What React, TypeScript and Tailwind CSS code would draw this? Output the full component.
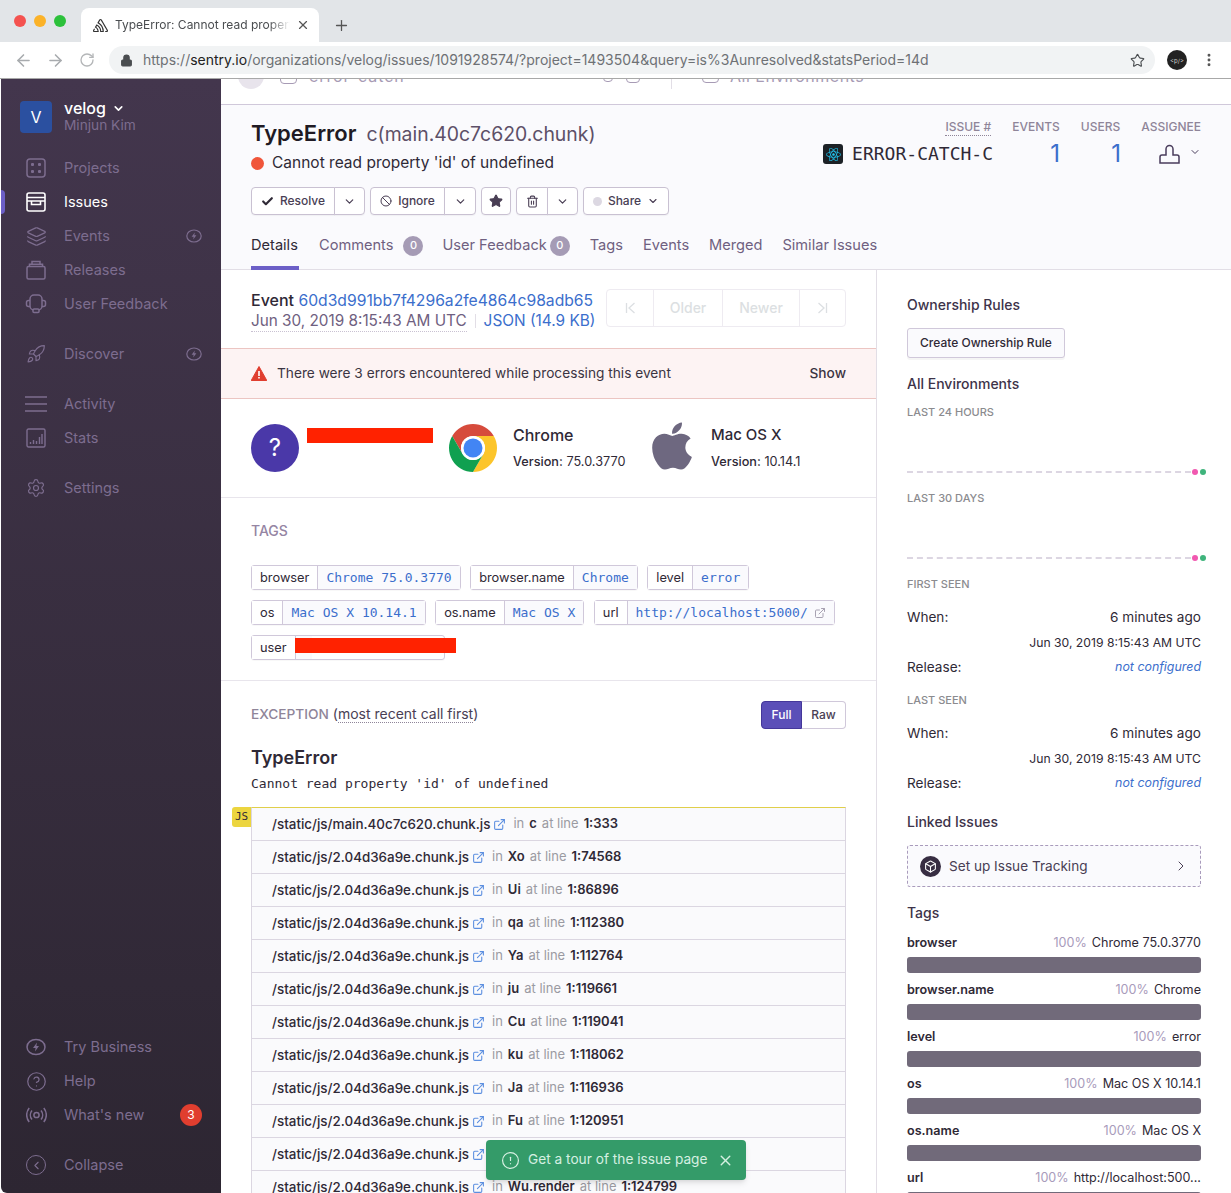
import React from 'react';
import {
  ArrowLeft, ArrowRight, Check, ChevronDown, ChevronLeft, ChevronRight, CircleAlert, CircleHelp,
  Ban, Box, ExternalLink, Layers, Lock, MoreVertical, Plus, RotateCw, Rocket, Settings, Star, Trash2, X,
} from 'lucide-react';
import { FaApple, FaReact } from 'react-icons/fa';
import { SiSentry } from 'react-icons/si';

const MONO = "font-['DejaVu_Sans_Mono',monospace]";

const Bolt = ({ size = 20 }: { size?: number }) => (
  <svg width={size} height={size} viewBox="0 0 20 20" fill="none" stroke="currentColor" strokeWidth="1.5">
    <ellipse cx="10" cy="10" rx="9" ry="7.5" />
    <path d="M11 5.500 7 11h2.600L9 14.500l4-5.500h-2.600z" fill="currentColor" stroke="none" />
  </svg>
);

const icons: Record<string, React.ReactNode> = {
  projects: (
    <svg width="20" height="20" viewBox="0 0 20 20" fill="none" stroke="currentColor" strokeWidth="1.5">
      <rect x="1" y="1" width="18" height="18" rx="3" />
      <rect x="5" y="5" width="3" height="3" rx="1" fill="currentColor" stroke="none" />
      <rect x="12" y="5" width="3" height="3" rx="1" fill="currentColor" stroke="none" />
      <rect x="5" y="12" width="3" height="3" rx="1" fill="currentColor" stroke="none" />
      <rect x="12" y="12" width="3" height="3" rx="1" fill="currentColor" stroke="none" />
    </svg>
  ),
  issues: (
    <svg width="20" height="20" viewBox="0 0 20 20" fill="none" stroke="currentColor" strokeWidth="1.6">
      <rect x="1" y="1" width="18" height="18" rx="2" />
      <path d="M1 5.500h18M1 9h18M5.500 9v3.500h9V9" />
    </svg>
  ),
  events: <Layers size={21} strokeWidth={1.4} />,
  releases: (
    <svg width="20" height="20" viewBox="0 0 20 20" fill="none" stroke="currentColor" strokeWidth="1.5">
      <rect x="1" y="6.500" width="18" height="12.500" rx="1.500" />
      <path d="M3.500 6.500V4.200h13v2.300M6 4.200V1.500h8v2.700" />
    </svg>
  ),
  feedback: (
    <svg width="22" height="20" viewBox="0 0 22 20" fill="none" stroke="currentColor" strokeWidth="1.5">
      <rect x="5" y="1" width="12" height="15" rx="4" />
      <path d="M5 6.500H3.500A2 2 0 0 0 1.500 8.500v2a2 2 0 0 0 2 2H5M17 6.500h1.500a2 2 0 0 1 2 2v2a2 2 0 0 1-2 2H17" />
      <rect x="8" y="15" width="6" height="3.500" rx="1" fill="#3f344a" />
    </svg>
  ),
  discover: <Rocket size={20} strokeWidth={1.4} />,
  activity: (
    <svg width="22" height="20" viewBox="0 0 22 20" fill="none" stroke="currentColor" strokeWidth="1.5">
      <path d="M0 3h22M0 10h22M0 17h22" />
    </svg>
  ),
  stats: (
    <svg width="20" height="20" viewBox="0 0 20 20" fill="none" stroke="currentColor" strokeWidth="1.4">
      <rect x="1" y="1" width="18" height="18" rx="1.500" />
      <path d="M4.500 16v-2M7.500 16v-4M10.500 16v-3M13.500 16V9M16 16V6" />
    </svg>
  ),
  settings: <Settings size={20} strokeWidth={1.4} />,
  business: <Bolt />,
  help: <CircleHelp size={21} strokeWidth={1.4} />,
  whatsnew: (
    <svg width="21" height="20" viewBox="0 0 21 20" fill="none" stroke="currentColor" strokeWidth="1.5">
      <circle cx="10.500" cy="10" r="2.600" />
      <path d="M6 5.500a7 7 0 0 0 0 9M15 5.500a7 7 0 0 1 0 9M3.200 3a11 11 0 0 0 0 14M17.800 3a11 11 0 0 1 0 14" />
    </svg>
  ),
  collapse: (
    <span className="flex h-5 w-5 items-center justify-center rounded-full border-[1.5px] border-current">
      <ChevronLeft size={13} strokeWidth={2} />
    </span>
  ),
};

const NavItem = ({ icon, label, active, bolt, badge }: { icon: string; label: string; active?: boolean; bolt?: boolean; badge?: string }) => (
  <div className={`relative flex h-[34px] items-center pl-[24px] pr-[19px] text-[14.5px] ${active ? 'text-white' : 'text-[#7d6d8f]'}`}>
    {active && <span className="absolute left-0 top-[5px] h-6 w-1 rounded-r bg-[#6c5fc7]" />}
    <span className="flex w-[22px] justify-center">{icons[icon]}</span>
    <span className="ml-[17px] flex-1">{label}</span>
    {bolt && <Bolt size={16} />}
    {badge && <span className="flex h-[22px] w-[22px] items-center justify-center rounded-full bg-[#e03e2f] text-xs text-white">{badge}</span>}
  </div>
);

const Sidebar = () => (
  <aside className="ml-px flex w-[220px] shrink-0 flex-col justify-between rounded-bl-md bg-gradient-to-b from-[#43364d] to-[#2d2632] pb-[11px] pt-[22px]">
    <div>
      <div className="flex h-8 pl-[19px]">
        <div className="flex h-8 w-8 items-center justify-center rounded bg-[#2b50a0] text-base text-white">V</div>
        <div className="-mt-[3px] ml-3">
          <div className="flex items-center text-base font-medium leading-5 text-white">velog <ChevronDown size={13} strokeWidth={3} className="ml-1.5" /></div>
          <div className="-mt-0.5 text-[13.7px] leading-[18px] text-[#7d6d8f]">Minjun Kim</div>
        </div>
      </div>
      <div className="mt-[18px]">
        <NavItem icon="projects" label="Projects" />
        <NavItem icon="issues" label="Issues" active />
        <NavItem icon="events" label="Events" bolt />
        <NavItem icon="releases" label="Releases" />
        <NavItem icon="feedback" label="User Feedback" />
      </div>
      <div className="mt-4"><NavItem icon="discover" label="Discover" bolt /></div>
      <div className="mt-4">
        <NavItem icon="activity" label="Activity" />
        <NavItem icon="stats" label="Stats" />
      </div>
      <div className="mt-4"><NavItem icon="settings" label="Settings" /></div>
    </div>
    <div>
      <NavItem icon="business" label="Try Business" />
      <NavItem icon="help" label="Help" />
      <NavItem icon="whatsnew" label="What's new" badge="3" />
      <div className="mt-4"><NavItem icon="collapse" label="Collapse" /></div>
    </div>
  </aside>
);

const BrowserChrome = () => (
  <header className="shrink-0">
    <div className="flex h-[42px] items-end bg-[#e2e5e8] pl-[14px]">
      <div className="mb-[15px] flex gap-2">
        <span className="h-3 w-3 rounded-full bg-[#f4524f]" />
        <span className="h-3 w-3 rounded-full bg-[#fbb228]" />
        <span className="h-3 w-3 rounded-full bg-[#2cc13b]" />
      </div>
      <div className="ml-[15px] flex h-[34px] w-[238px] items-center rounded-t-lg bg-white pl-3 pr-[9px] text-xs text-[#4a4d50]">
        <SiSentry size={15} className="shrink-0 text-[#333]" />
        <span className="ml-[7px] w-[175px] overflow-hidden whitespace-nowrap [mask-image:linear-gradient(to_right,black_88%,transparent)]">TypeError: Cannot read propert</span>
        <X size={14} strokeWidth={2} className="ml-auto shrink-0 text-[#555]" />
      </div>
      <Plus size={17} strokeWidth={1.8} className="mb-2 ml-3.5 text-[#555]" />
    </div>
    <div className="flex h-[37px] items-center border-b border-[#a8a8a8] bg-white pl-[14px] pr-[8px]">
      <ArrowLeft size={19} className="shrink-0 text-[#a8abae]" />
      <ArrowRight size={19} className="ml-[13px] shrink-0 text-[#a8abae]" />
      <RotateCw size={16} className="ml-[14px] shrink-0 text-[#b4b6b8]" />
      <div className="ml-[14px] flex h-7 w-[1046px] shrink-0 items-center rounded-full bg-[#f1f3f4] pl-[11px] pr-[10px] text-sm text-[#6e7175]">
        <Lock size={13} fill="#4a4d50" className="text-[#4a4d50]" />
        <span className="ml-[10px] flex-1">https://<span className="text-[#222]">sentry.io</span>/organizations/velog/issues/1091928574/?project=1493504&amp;query=is%3Aunresolved&amp;statsPeriod=14d</span>
        <Star size={15} strokeWidth={1.8} className="text-[#4a4d50]" />
      </div>
      <span className="ml-3 flex h-5 w-5 shrink-0 items-center justify-center rounded-full bg-[#222] text-[6px] text-[#ccc]">&lt;p/&gt;</span>
      <MoreVertical size={16} strokeWidth={2.4} className="ml-3.5 shrink-0 text-[#555]" />
    </div>
  </header>
);

const Btn = ({ className = '', children }: { className?: string; children: React.ReactNode }) => (
  <div className={`flex h-7 items-center justify-center border border-[#c9c1d2] bg-white text-xs font-medium text-[#493e54] shadow-[0_1px_1px_rgba(0,0,0,0.04)] ${className}`}>{children}</div>
);

const Caret = () => <ChevronDown size={13} strokeWidth={2.2} />;

const StatHead = ({ label, className = '' }: { label: string; className?: string }) => (
  <span className={`text-xs font-medium text-[#8f8599] ${className}`}>{label}</span>
);

const IssueHeader = () => (
  <section className="flex h-[166px] shrink-0 flex-col border-y border-y-[#d0c8da] border-b-[#e2dee6] bg-[#fafafd] pl-[30px]">
    <div className="flex justify-between pr-[30px] pt-[14px]">
      <div>
        <div className="flex items-baseline text-[#1f1a24]">
          <h1 className="text-[22px] font-semibold leading-7">TypeError</h1>
          <span className="ml-2.5 text-[19.4px] leading-none text-[#5d5068]">c(main.40c7c620.chunk)</span>
        </div>
        <div className="mt-1 flex items-center text-[15.5px] leading-6 text-[#2f2936]">
          <span className="h-[13px] w-[13px] rounded-full bg-[#f0553a]" />
          <span className="ml-2">Cannot read property 'id' of undefined</span>
        </div>
      </div>
      <div>
        <div className="flex justify-end gap-[21px] leading-4">
          <StatHead label="ISSUE #" className="border-b border-dotted border-[#8f8599]" />
          <StatHead label="EVENTS" />
          <StatHead label="USERS" />
          <StatHead label="ASSIGNEE" />
        </div>
        <div className="mt-0.5 flex items-center">
          <span className="flex h-5 w-5 items-center justify-center rounded-[3px] bg-[#1c2126]"><FaReact size={15} className="text-[#20c4ee]" /></span>
          <span className={`ml-[9px] text-lg text-[#2f2936] ${MONO}`}>ERROR-CATCH-C</span>
          <span className="w-[67px] text-right text-2xl text-[#3b6ecc]">1</span>
          <span className="w-[61px] text-right text-2xl text-[#3b6ecc]">1</span>
          <span className="ml-[38px] flex items-center text-[#4a3d5c]">
            <svg width="21" height="21" viewBox="0 0 21 21" fill="none" stroke="currentColor" strokeWidth="1.5">
              <path d="M7 11V5a3.500 3.500 0 0 1 7 0v6h4a2 2 0 0 1 2 2v6H1v-6a2 2 0 0 1 2-2z" />
            </svg>
            <ChevronDown size={12} className="-mt-1 ml-[9px]" />
          </span>
        </div>
      </div>
    </div>
    <div className="mt-3 flex">
      <Btn className="w-[84px] gap-1.5 rounded-l"><Check size={13} strokeWidth={4} className="text-[#2f2936]" />Resolve</Btn>
      <Btn className="-ml-px w-[31px] rounded-r"><Caret /></Btn>
      <Btn className="ml-[5px] w-[75px] gap-1.5 rounded-l"><Ban size={12} />Ignore</Btn>
      <Btn className="-ml-px w-[32px] rounded-r"><Caret /></Btn>
      <Btn className="ml-[5px] w-[30px] rounded"><Star size={14} fill="currentColor" /></Btn>
      <Btn className="ml-[5px] w-[32px] rounded-l"><Trash2 size={13} /></Btn>
      <Btn className="-ml-px w-[31px] rounded-r"><Caret /></Btn>
      <Btn className="ml-[5px] w-[86px] gap-1.5 rounded"><span className="h-[9px] w-[9px] rounded-full bg-[#dcd8e2]" />Share<ChevronDown size={12} strokeWidth={2.2} /></Btn>
    </div>
    <nav className="mt-5 flex gap-5 text-[14.6px] leading-[21px] text-[#6f6080]">
      <span className="h-[35px] w-12 border-b-4 border-[#6c5fc7] text-[#2f2936]">Details</span>
      <span className="flex h-[21px] items-center">Comments<span className="ml-2.5 flex h-5 w-5 items-center justify-center rounded-full bg-[#a59bb5] text-[11px] font-medium text-white">0</span></span>
      <span className="-ml-px flex h-[21px] items-center">User Feedback<span className="ml-[3px] flex h-5 w-5 items-center justify-center rounded-full bg-[#a59bb5] text-[11px] font-medium text-white">0</span></span>
      <span>Tags</span>
      <span>Events</span>
      <span>Merged</span>
      <span>Similar Issues</span>
    </nav>
  </section>
);

const Chrome = () => (
  <svg width="48" height="48" viewBox="0 0 48 48">
    <path d="M24 12H44.780A24 24 0 0 0 3.220 12L13.610 30A12 12 0 0 1 24 12Z" fill="#d64b3c" />
    <path d="M34.390 30 24 48A24 24 0 0 0 44.780 12H24A12 12 0 0 1 34.390 30Z" fill="#fcc52b" />
    <path d="M13.610 30 3.220 12A24 24 0 0 0 24 48L34.390 30A12 12 0 0 1 13.610 30Z" fill="#10a050" />
    <circle cx="24" cy="24" r="12" fill="#fff" />
    <circle cx="24" cy="24" r="9.500" fill="#4285f4" />
  </svg>
);

const Tag = ({ k, v, link }: { k: string; v: string; link?: boolean }) => (
  <div className="flex h-[25px] items-stretch rounded-[3px] border border-[#d0c8da] text-[12.8px] shadow-[0_1px_1px_rgba(0,0,0,0.03)]">
    <span className="flex items-center bg-white px-2 text-[#2f2936]">{k}</span>
    <span className={`flex items-center border-l border-[#d0c8da] bg-[#fafafd] px-2 text-[13px] text-[#3b6ecc] ${MONO}`}>
      {v}
      {link && <ExternalLink size={12} className="ml-1.5 text-[#a8a2b2]" />}
    </span>
  </div>
);

const frames: [string, string, string][] = [
  ['/static/js/main.40c7c620.chunk.js', 'c', '1:333'],
  ['/static/js/2.04d36a9e.chunk.js', 'Xo', '1:74568'],
  ['/static/js/2.04d36a9e.chunk.js', 'Ui', '1:86896'],
  ['/static/js/2.04d36a9e.chunk.js', 'qa', '1:112380'],
  ['/static/js/2.04d36a9e.chunk.js', 'Ya', '1:112764'],
  ['/static/js/2.04d36a9e.chunk.js', 'ju', '1:119661'],
  ['/static/js/2.04d36a9e.chunk.js', 'Cu', '1:119041'],
  ['/static/js/2.04d36a9e.chunk.js', 'ku', '1:118062'],
  ['/static/js/2.04d36a9e.chunk.js', 'Ja', '1:116936'],
  ['/static/js/2.04d36a9e.chunk.js', 'Fu', '1:120951'],
  ['/static/js/2.04d36a9e.chunk.js', 'Cu', '1:119041'],
  ['/static/js/2.04d36a9e.chunk.js', 'Wu.render', '1:124799'],
];

const Frame = ({ file, fn, line }: { file: string; fn: string; line: string }) => (
  <div className="flex h-[33px] items-center border-b border-[#dbd6e1] bg-[#fafafc] pl-5 text-[13px] text-[#2f2936]">
    <span className="text-[13.4px] font-medium">{file}</span>
    <ExternalLink size={13} className="ml-[3px] text-[#5c8fe0]" />
    <span className="ml-[7px] text-[#9a9aa2]">in</span>
    <span className="ml-[5px] font-semibold">{fn}</span>
    <span className="ml-[5px] text-[#9a9aa2]">at line</span>
    <span className="ml-[5px] font-semibold">{line}</span>
  </div>
);

const PagerEdge = ({ flip }: { flip?: boolean }) => (
  <svg width="11" height="12" viewBox="0 0 11 12" fill="none" stroke="currentColor" strokeWidth="1.3" className={flip ? 'rotate-180' : ''}>
    <path d="M1.500 1v10M9.500 1 4 6l5.500 5" />
  </svg>
);

const MainColumn = () => (
  <div className="w-[656px] shrink-0 border-r border-[#e2dee6]">
    <div className="flex h-[78px] items-start justify-between px-[30px] pt-[18px] leading-[22px]">
      <div className="whitespace-nowrap">
        <div className="h-[22px] text-[15.7px] text-[#2f2936]"><span className="text-base font-medium">Event</span> <span className="text-[#3b6ecc]">60d3d991bb7f4296a2fe4864c98adb65</span></div>
        <div className="flex text-[15.3px] text-[#6f6080]">
          <span className="border-b border-dotted border-[#c9c1d2] leading-[21px]">Jun 30, 2019 8:15:43 AM UTC</span>
          <span className="mx-2 my-1 border-l border-[#e2dee6]" />
          <span className="text-[15.4px] text-[#3b6ecc]">JSON (14.9 KB)</span>
        </div>
      </div>
      <div className="mt-px flex h-[38px] rounded border border-[#eeebf1] text-sm font-medium text-[#dcdfe2]">
        <span className="flex w-[46px] items-center justify-center"><PagerEdge /></span>
        <span className="flex w-[69px] items-center justify-center border-l border-[#eeebf1]">Older</span>
        <span className="flex w-[77px] items-center justify-center border-l border-[#eeebf1]">Newer</span>
        <span className="flex w-[46px] items-center justify-center border-l border-[#eeebf1]"><PagerEdge flip /></span>
      </div>
    </div>
    <div className="flex h-[51px] items-center justify-between border-y border-[#ecc5c2] bg-[#fdf3f3] px-[30px] text-[13.7px] text-[#3b3442]">
      <span className="flex items-center">
        <svg width="16" height="15" viewBox="0 0 16 15">
          <path d="M8 0.500 15.800 14.500H0.200z" fill="#e03e2f" stroke="#e03e2f" strokeLinejoin="round" />
          <path d="M7.200 5h1.600v5H7.200zM7.200 11h1.600v1.600H7.200z" fill="#fff" />
        </svg>
        <span className="ml-2.5">There were 3 errors encountered while processing this event</span>
      </span>
      <span className="font-medium">Show</span>
    </div>
    <div className="relative flex h-[99px] items-start border-b border-[#e8e5ec] pl-[30px] pt-[25px]">
      <span className="flex h-12 w-12 items-center justify-center rounded-full bg-[#4a38a8] text-2xl text-white">?</span>
      <span className="absolute left-[86px] top-[29px] h-[15px] w-[126px] bg-[#ff2200]" />
      <span className="ml-[150px]"><Chrome /></span>
      <div className="ml-4 w-[112px] shrink-0 whitespace-nowrap">
        <div className="text-base font-medium leading-[22px] text-[#2f2936]">Chrome</div>
        <div className="mt-2 text-[12.7px] leading-4 text-[#2f2936]"><span className="font-medium">Version:</span> 75.0.3770</div>
      </div>
      <FaApple size={54} className="-mt-[5px] ml-5 shrink-0 text-[#6e6880]" />
      <div className="ml-3 whitespace-nowrap">
        <div className="text-[15px] font-medium leading-[22px] text-[#2f2936]">Mac OS X</div>
        <div className="mt-2 text-[12.7px] leading-4 text-[#2f2936]"><span className="font-medium">Version:</span> 10.14.1</div>
      </div>
    </div>
    <div className="h-[183px] border-b border-[#e8e5ec] pl-[30px] pt-[23px]">
      <h3 className="text-sm font-medium leading-5 text-[#9585a3]">TAGS</h3>
      <div className="relative mt-[24px] flex flex-wrap gap-x-[9.5px] gap-y-2.5">
        <Tag k="browser" v="Chrome 75.0.3770" />
        <Tag k="browser.name" v="Chrome" />
        <Tag k="level" v="error" />
        <div className="w-full" />
        <div className="-mt-2.5 flex w-full flex-wrap gap-x-[9.5px]">
          <Tag k="os" v="Mac OS X 10.14.1" />
          <Tag k="os.name" v="Mac OS X" />
          <Tag k="url" v="http://localhost:5000/" link />
        </div>
        <div className="w-[194px]"><Tag k="user" v="" /></div>
        <span className="absolute left-[44px] top-[73px] h-[15px] w-[161px] bg-[#ff2200]" />
      </div>
    </div>
    <div className="relative px-[30px] pt-5">
      <div className="flex items-center justify-between">
        <div className="-mt-0.5 text-sm text-[#493e54]"><span className="text-[13.7px] font-medium text-[#8f8599]">EXCEPTION</span> (<span className="border-b border-dotted border-[#8f8599]">most recent call first</span>)</div>
        <div className="flex h-7 text-xs font-medium">
          <span className="flex w-[41px] items-center justify-center rounded-l border border-[#44379a] bg-[#5b4fb8] text-white">Full</span>
          <span className="flex w-[44px] items-center justify-center rounded-r border border-l-0 border-[#d0c8da] text-[#493e54]">Raw</span>
        </div>
      </div>
      <h2 className="mt-[15px] text-lg font-semibold leading-7 text-[#2f2936]">TypeError</h2>
      <p className={`mt-0.5 text-[13px] leading-5 text-[#2f2936] ${MONO}`}>Cannot read property 'id' of undefined</p>
      <div className="relative mt-[13px] border-x border-t border-x-[#dbd6e1] border-t-[#e0cf4a]">
        <span className={`absolute -left-5 -top-px flex h-5 w-[19px] items-center justify-center rounded-l-[3px] bg-[#ecd53f] text-[11px] text-[#2f2936] ${MONO}`}>JS</span>
        {frames.map(([file, fn, line], i) => <Frame key={i} file={file} fn={fn} line={line} />)}
      </div>
    </div>
  </div>
);

const SideHead = ({ className = '', children }: { className?: string; children: React.ReactNode }) => (
  <h4 className={`text-sm font-medium leading-5 text-[#3d3349] ${className}`}>{children}</h4>
);

const Small = ({ className = '', children }: { className?: string; children: React.ReactNode }) => (
  <div className={`text-[11px] font-medium leading-4 text-[#8b8b8f] ${className}`}>{children}</div>
);

const Spark = ({ className = '' }: { className?: string }) => (
  <div className={`flex h-2 items-center ${className}`}>
    <div className="h-0 w-[284px] shrink-0 border-t-2 border-dashed border-[#dcd6e2]" />
    <span className="ml-px h-1.5 w-1.5 shrink-0 rounded-full bg-[#f158b0]" />
    <span className="ml-0.5 h-1.5 w-1.5 shrink-0 rounded-full bg-[#3fb47c]" />
  </div>
);

const Seen = ({ label, className = '' }: { label: string; className?: string }) => (
  <div className={className}>
    <Small>{label}</Small>
    <div className="mt-[15px] flex justify-between text-[13.6px] leading-5 text-[#2f2936]"><span>When:</span><span>6 minutes ago</span></div>
    <div className="mt-1.5 text-right text-[12.2px] leading-5 text-[#2f2936]">Jun 30, 2019 8:15:43 AM UTC</div>
    <div className="mt-1 flex justify-between text-[13.6px] leading-5 text-[#2f2936]"><span>Release:</span><span className="text-[12.4px] italic text-[#3b6ecc]">not configured</span></div>
  </div>
);

const bars: [string, string][] = [
  ['browser', 'Chrome 75.0.3770'],
  ['browser.name', 'Chrome'],
  ['level', 'error'],
  ['os', 'Mac OS X 10.14.1'],
  ['os.name', 'Mac OS X'],
  ['url', 'http://localhost:500...'],
];

const RightColumn = () => (
  <div className="min-w-0 flex-1 px-[30px] pt-[25px]">
    <SideHead>Ownership Rules</SideHead>
    <div className="mt-[13px] flex h-[30px] w-[158px] items-center justify-center rounded-[3px] border border-[#d0c8da] bg-[#fafafd] text-xs font-medium text-[#2f2936] shadow-[0_2px_0_rgba(0,0,0,0.04)]">Create Ownership Rule</div>
    <SideHead className="mt-4">All Environments</SideHead>
    <Small className="mt-[10px]">LAST 24 HOURS</Small>
    <Spark className="mt-[48px]" />
    <Small className="mt-[14px]">LAST 30 DAYS</Small>
    <Spark className="mt-[48px]" />
    <Seen label="FIRST SEEN" className="mt-[14px]" />
    <Seen label="LAST SEEN" className="mt-[15px]" />
    <SideHead className="mt-[19px]">Linked Issues</SideHead>
    <div className="mt-[13px] flex h-[42px] items-center rounded-[3px] border border-dashed border-[#a99bbc] bg-[#fafafd] pl-3 pr-[11px] text-[13.6px] text-[#493e54]">
      <span className="flex h-[21px] w-[21px] items-center justify-center rounded-full bg-[#372d42]"><Box size={13} strokeWidth={2} className="text-white" /></span>
      <span className="ml-2 flex-1">Set up Issue Tracking</span>
      <ChevronRight size={16} strokeWidth={1.5} />
    </div>
    <SideHead className="mt-4">Tags</SideHead>
    <div className="mt-3">
      {bars.map(([k, v]) => (
        <div key={k} className="h-[47px]">
          <div className="flex justify-between text-[12.6px] leading-[16px]">
            <span className="font-semibold text-[#2f2936]">{k}</span>
            <span className="text-[#2f2936]"><span className="mr-[5px] text-[#a89bbb]">100%</span>{v}</span>
          </div>
          <div className="mt-1.5 h-4 rounded-[3px] bg-[#716a7a]" />
        </div>
      ))}
    </div>
  </div>
);

const FilterBar = () => (
  <div className="h-[25px] shrink-0 overflow-hidden bg-white text-[#a79bb5]">
    <div className="-mt-[16px] flex h-[26px] items-center whitespace-nowrap text-base">
      <span className="ml-[17px] h-[26px] w-[26px] shrink-0 rounded-full bg-[#e8e4ec]" />
      <span className="ml-4 h-4 w-[17px] shrink-0 rounded-sm border-[1.5px] border-[#a79bb5]" />
      <span className="ml-3 w-[294px] shrink-0 tracking-[0.9px]">error-catch</span>
      <span className="h-3 w-2.5 shrink-0 rounded-sm border border-[#a79bb5]" />
      <span className="ml-[13px] h-3.5 w-3.5 shrink-0 rounded-sm border border-[#a79bb5]" />
      <span className="ml-[31px] h-[26px] shrink-0 border-l border-[#e2dee6]" />
      <span className="ml-[30px] h-3.5 w-[17px] shrink-0 rounded-sm border-[1.5px] border-[#a79bb5]" />
      <span className="ml-[11px] tracking-[0.5px]">All Environments</span>
    </div>
  </div>
);

const App: React.FC = () => (
  <div className="relative flex h-[1193px] w-[1231px] flex-col overflow-hidden bg-white font-['Inter',sans-serif]">
    <BrowserChrome />
    <div className="flex min-h-0 flex-1">
      <Sidebar />
      <main className="flex min-w-0 flex-1 flex-col">
        <FilterBar />
        <IssueHeader />
        <div className="flex min-h-0 flex-1">
          <MainColumn />
          <RightColumn />
        </div>
      </main>
    </div>
    <div className="absolute left-[486px] top-[1140px] flex h-10 w-[260px] items-center rounded bg-[#349b69] pl-[15px] text-[13.7px] text-[#d6f0e2] shadow-md">
      <CircleAlert size={19} strokeWidth={1.5} />
      <span className="-mt-0.5 ml-2 whitespace-nowrap">Get a tour of the issue page</span>
      <X size={17} strokeWidth={2} className="ml-[9px]" />
    </div>
  </div>
);

export default App;
